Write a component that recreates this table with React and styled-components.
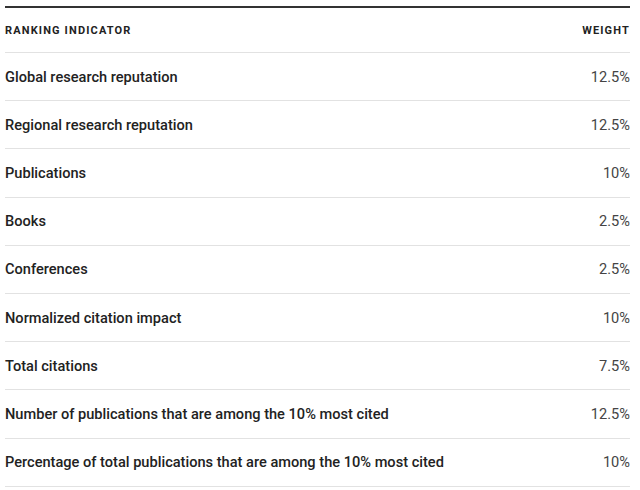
import React from 'react';
import styled, { createGlobalStyle } from 'styled-components';

const GlobalStyle = createGlobalStyle`
  body {
    margin: 0;
    background: #fff;
    font-family: Roboto, "Liberation Sans", sans-serif;
  }
`;

const Wrapper = styled.div`
  padding: 6px 10px 0 5px;
`;

const Table = styled.table`
  width: 625px;
  border-collapse: collapse;
  border-top: 2px solid #333;
`;

const HeadCell = styled.th`
  height: 44px;
  padding: 0;
  font-size: 11px;
  font-weight: 700;
  letter-spacing: 1.15px;
  color: #222;
  text-align: ${p => (p.$right ? 'right' : 'left')};
  border-bottom: 1px solid #e2e2e2;
  vertical-align: middle;
`;

const Row = styled.tr`
  border-bottom: 1px solid #e2e2e2;
`;

const Cell = styled.td`
  height: 47.2px;
  padding: 0;
  font-size: 14.6px;
  font-weight: ${p => (p.$value ? 400 : 500)};
  color: ${p => (p.$value ? '#444' : '#222')};
  text-align: ${p => (p.$value ? 'right' : 'left')};
  vertical-align: middle;
`;

const rows = [
  ['Global research reputation', '12.5%'],
  ['Regional research reputation', '12.5%'],
  ['Publications', '10%'],
  ['Books', '2.5%'],
  ['Conferences', '2.5%'],
  ['Normalized citation impact', '10%'],
  ['Total citations', '7.5%'],
  ['Number of publications that are among the 10% most cited', '12.5%'],
  ['Percentage of total publications that are among the 10% most cited', '10%'],
];

export default function App() {
  return (
    <Wrapper>
      <GlobalStyle />
      <Table>
        <thead>
          <tr>
            <HeadCell>RANKING INDICATOR</HeadCell>
            <HeadCell $right>WEIGHT</HeadCell>
          </tr>
        </thead>
        <tbody>
          {rows.map(([name, weight]) => (
            <Row key={name}>
              <Cell>{name}</Cell>
              <Cell $value>{weight}</Cell>
            </Row>
          ))}
        </tbody>
      </Table>
    </Wrapper>
  );
}
